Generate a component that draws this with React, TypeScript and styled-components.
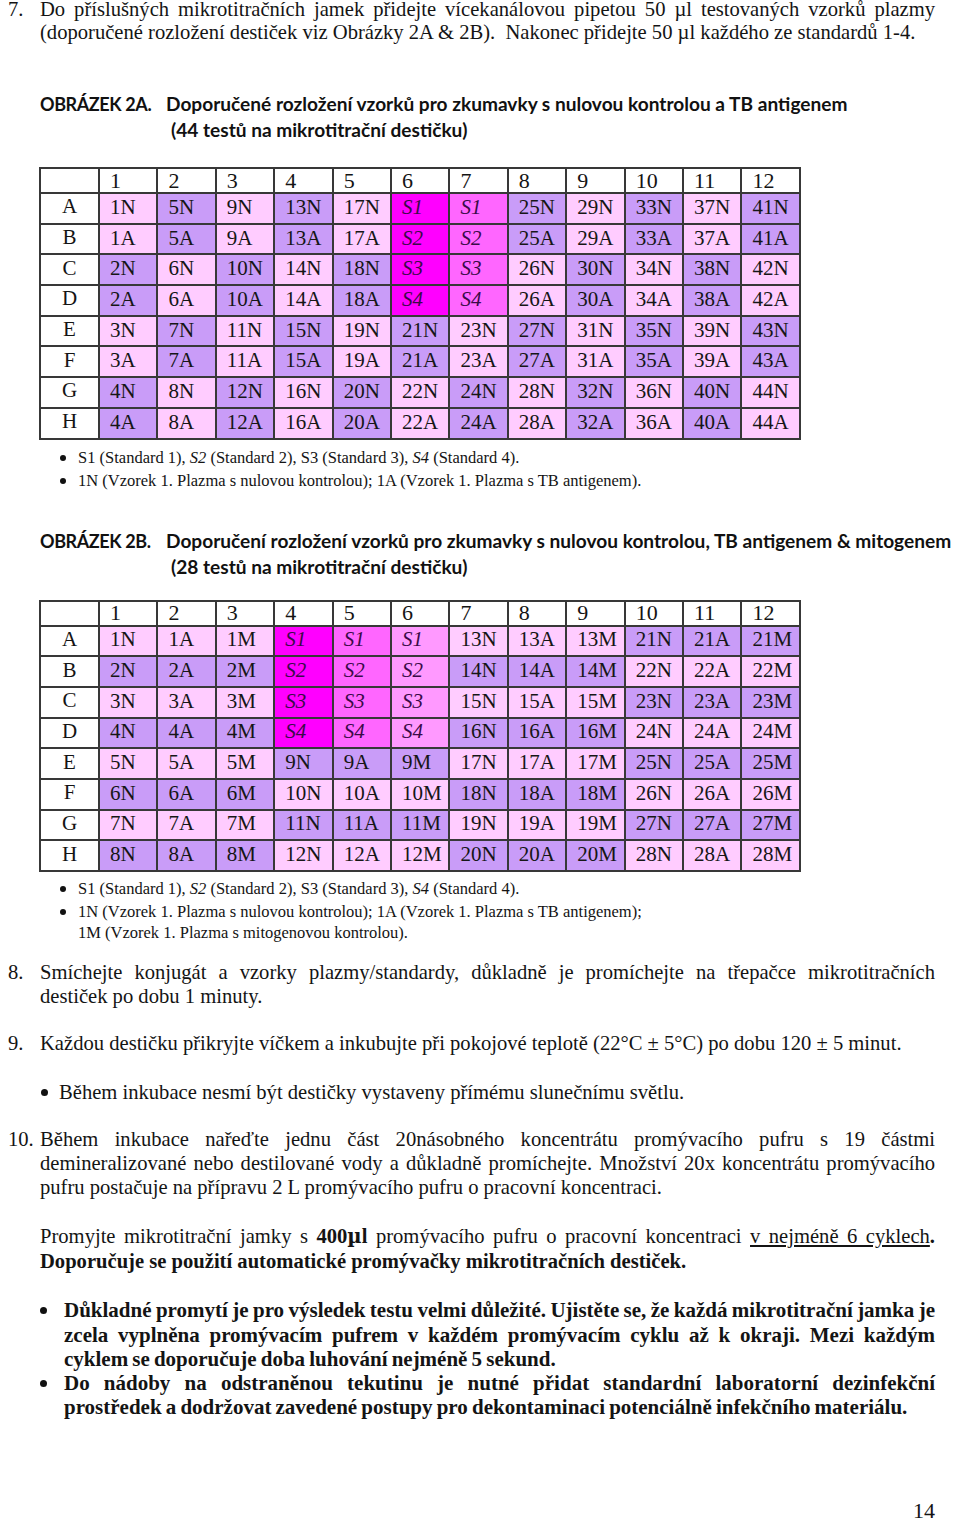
import React from 'react';
import styled, { createGlobalStyle } from 'styled-components';

const GlobalStyle = createGlobalStyle`
  html, body { margin: 0; padding: 0; background: #ffffff; }
  body {
    font-family: "Liberation Serif", "Times New Roman", serif;
    color: #141414;
  }
`;

const Page = styled.div`
  width: 960px;
  min-height: 1523px;
  box-sizing: border-box;
  padding: 0 25px 0 8px;
  display: flex;
  flex-direction: column;
`;

const Step = styled.div<{ $mt: number; $lh: number }>`
  display: grid;
  grid-template-columns: 32px 1fr;
  font-size: 20.6px;
  line-height: ${(p) => p.$lh}px;
  margin-top: ${(p) => p.$mt}px;
`;

const StepNo = styled.span``;

const StepText = styled.div`
  text-align: justify;
`;

const FigHeading = styled.div<{ $mt: number }>`
  display: flex;
  margin: ${(p) => p.$mt}px 0 0 32px;
  font-family: Lato, "Open Sans", sans-serif;
  font-weight: 700;
  font-size: 19.1px;
  line-height: 26px;
  color: #111;
  white-space: nowrap;
`;

const FigLabel = styled.span`
  flex: none;
  width: 126px;
  font-size: 18px;
  letter-spacing: -0.4px;
`;

const FigTitle = styled.div`
  display: flex;
  flex-direction: column;
`;

const FigSub = styled.span`
  padding-left: 5px;
`;

const Plate = styled.table<{ $mt: number }>`
  border-collapse: collapse;
  table-layout: fixed;
  width: 762px;
  margin: ${(p) => p.$mt}px 0 0 31px;
  border: 2px solid #303030;
  font-size: 21px;
  line-height: 1;
`;

const HeadRow = styled.tr`
  height: 25px;
`;

const BodyRow = styled.tr`
  height: 30.7px;
`;

const HeadCell = styled.th`
  border: 2px solid #383838;
  background: #ffffff;
  padding: 0 0 0 10px;
  font-size: 22px;
  font-weight: 400;
  text-align: left;
  vertical-align: middle;
`;

const RowLabel = styled.th`
  border: 2px solid #383838;
  background: #ffffff;
  padding: 0 0 3px 0;
  font-weight: 400;
  text-align: center;
  vertical-align: middle;
`;

const Well = styled.td<{ $bg: string; $std: boolean }>`
  border: 2px solid #383838;
  background: ${(p) => p.$bg};
  padding: 0 0 2px 10px;
  text-align: left;
  vertical-align: middle;
  white-space: nowrap;
  font-style: ${(p) => (p.$std ? 'italic' : 'normal')};
  color: ${(p) => (p.$std ? '#3a0b48' : '#161616')};
`;

const Notes = styled.ul<{ $mt: number }>`
  list-style: none;
  margin: ${(p) => p.$mt}px 0 0 52px;
  padding: 0;
  font-size: 16.5px;
  line-height: 21px;
`;

const NoteItem = styled.li`
  display: grid;
  grid-template-columns: 18px 1fr;
  margin-bottom: 2px;
`;

const Dot = styled.span<{ $top: number; $size?: number }>`
  display: block;
  width: ${(p) => p.$size ?? 6}px;
  height: ${(p) => p.$size ?? 6}px;
  margin-top: ${(p) => p.$top}px;
  border-radius: 50%;
  background: #111;
`;

const BulletList = styled.ul<{ $mt: number; $ml: number; $gap: number; $bold?: boolean }>`
  list-style: none;
  margin: ${(p) => p.$mt}px 0 0 ${(p) => p.$ml}px;
  padding: 0;
  font-size: ${(p) => (p.$bold ? 21 : 20.6)}px;
  word-spacing: ${(p) => (p.$bold ? -1.1 : 0)}px;
  line-height: 24.3px;
  font-weight: ${(p) => (p.$bold ? 700 : 400)};
  & > li {
    display: grid;
    grid-template-columns: ${(p) => p.$gap}px 1fr;
    text-align: justify;
  }
`;

const Para = styled.div<{ $mt: number }>`
  margin: ${(p) => p.$mt}px 0 0 32px;
  font-size: 20.6px;
  line-height: 24px;
`;

const JustLine = styled.div`
  text-align: justify;
  text-align-last: justify;
`;

const BoldLine = styled.div`
  font-weight: 700;
`;

const Under = styled.span`
  text-decoration: underline;
  text-underline-offset: 2px;
`;

const Micro = styled.span`
  font-family: "DejaVu Serif", serif;
  font-size: 0.95em;
`;

const PageNo = styled.div`
  margin-top: auto;
  text-align: right;
  font-size: 22px;
  line-height: 24px;
`;

const LIGHT = '#ffccff';
const PURPLE = '#c99cf8';
const MAG1 = '#ff00ff';
const MAG2 = '#ff66ff';
const MAG3 = '#ff99ff';

const ROWS = ['A', 'B', 'C', 'D', 'E', 'F', 'G', 'H'];
const COLS = [1, 2, 3, 4, 5, 6, 7, 8, 9, 10, 11, 12];

type WellData = { label: string; bg: string; std: boolean };

const plate2A: WellData[][] = (() => {
  const data = [
    ['1N', '5N', '9N', '13N', '17N', 'S1', 'S1', '25N', '29N', '33N', '37N', '41N'],
    ['1A', '5A', '9A', '13A', '17A', 'S2', 'S2', '25A', '29A', '33A', '37A', '41A'],
    ['2N', '6N', '10N', '14N', '18N', 'S3', 'S3', '26N', '30N', '34N', '38N', '42N'],
    ['2A', '6A', '10A', '14A', '18A', 'S4', 'S4', '26A', '30A', '34A', '38A', '42A'],
    ['3N', '7N', '11N', '15N', '19N', '21N', '23N', '27N', '31N', '35N', '39N', '43N'],
    ['3A', '7A', '11A', '15A', '19A', '21A', '23A', '27A', '31A', '35A', '39A', '43A'],
    ['4N', '8N', '12N', '16N', '20N', '22N', '24N', '28N', '32N', '36N', '40N', '44N'],
    ['4A', '8A', '12A', '16A', '20A', '22A', '24A', '28A', '32A', '36A', '40A', '44A'],
  ];
  return data.map((row, r) =>
    row.map((label, c) => {
      const std = label.startsWith('S');
      let bg = (Math.floor(r / 2) + c) % 2 === 0 ? LIGHT : PURPLE;
      if (std) bg = c === 5 ? MAG1 : MAG2;
      return { label, bg, std };
    })
  );
})();

const plate2B: WellData[][] = ROWS.map((_, r) => {
  const cells: WellData[] = [];
  for (let g = 0; g < 4; g++) {
    for (let k = 0; k < 3; k++) {
      const suffix = ['N', 'A', 'M'][k];
      if (g === 1 && r < 4) {
        cells.push({ label: `S${r + 1}`, bg: [MAG1, MAG2, MAG3][k], std: true });
      } else {
        const base = g === 0 ? r + 1 : g === 1 ? r + 5 : g === 2 ? r + 13 : r + 21;
        cells.push({
          label: `${base}${suffix}`,
          bg: (r + g) % 2 === 0 ? LIGHT : PURPLE,
          std: false,
        });
      }
    }
  }
  return cells;
});

const PlateTable: React.FC<{ data: WellData[][]; mt: number }> = ({ data, mt }) => (
  <Plate $mt={mt}>
    <colgroup>
      <col style={{ width: 59 }} />
      {COLS.map((c) => (
        <col key={c} />
      ))}
    </colgroup>
    <thead>
      <HeadRow>
        <HeadCell />
        {COLS.map((c) => (
          <HeadCell key={c}>{c}</HeadCell>
        ))}
      </HeadRow>
    </thead>
    <tbody>
      {data.map((row, r) => (
        <BodyRow key={ROWS[r]}>
          <RowLabel>{ROWS[r]}</RowLabel>
          {row.map((w, c) => (
            <Well key={c} $bg={w.bg} $std={w.std}>
              {w.label}
            </Well>
          ))}
        </BodyRow>
      ))}
    </tbody>
  </Plate>
);

const StdNote = () => (
  <NoteItem>
    <Dot $top={8} />
    <span>
      S1 (Standard 1), <i>S2</i> (Standard 2), S3 (Standard 3), <i>S4</i> (Standard 4).
    </span>
  </NoteItem>
);

export default function App() {
  return (
    <>
      <GlobalStyle />
      <Page>
        <Step $mt={-2} $lh={22.5}>
          <StepNo>7.</StepNo>
          <StepText>
            Do příslušných mikrotitračních jamek přidejte vícekanálovou pipetou 50 µl testovaných
            vzorků plazmy (doporučené rozložení destiček viz Obrázky 2A &amp; 2B).&nbsp; Nakonec
            přidejte 50 µl každého ze standardů 1-4.
          </StepText>
        </Step>

        <FigHeading $mt={48}>
          <FigLabel>OBRÁZEK 2A.</FigLabel>
          <FigTitle>
            <span>Doporučené rozložení vzorků pro zkumavky s nulovou kontrolou a TB antigenem</span>
            <FigSub>(44 testů na mikrotitrační destičku)</FigSub>
          </FigTitle>
        </FigHeading>

        <PlateTable data={plate2A} mt={24} />

        <Notes $mt={7}>
          <StdNote />
          <NoteItem>
            <Dot $top={8} />
            <span>1N (Vzorek 1. Plazma s nulovou kontrolou); 1A (Vzorek 1. Plazma s TB antigenem).</span>
          </NoteItem>
        </Notes>

        <FigHeading $mt={35}>
          <FigLabel>OBRÁZEK 2B.</FigLabel>
          <FigTitle>
            <span>
              Doporučení rozložení vzorků pro zkumavky s nulovou kontrolou, TB antigenem &amp; mitogenem
            </span>
            <FigSub>(28 testů na mikrotitrační destičku)</FigSub>
          </FigTitle>
        </FigHeading>

        <PlateTable data={plate2B} mt={20} />

        <Notes $mt={6}>
          <StdNote />
          <NoteItem>
            <Dot $top={8} />
            <span>
              1N (Vzorek 1. Plazma s nulovou kontrolou); 1A (Vzorek 1. Plazma s TB antigenem);
              <br />
              1M (Vzorek 1. Plazma s mitogenovou kontrolou).
            </span>
          </NoteItem>
        </Notes>

        <Step $mt={15} $lh={24}>
          <StepNo>8.</StepNo>
          <StepText>
            Smíchejte konjugát a vzorky plazmy/standardy, důkladně je promíchejte na třepačce
            mikrotitračních destiček po dobu 1 minuty.
          </StepText>
        </Step>

        <Step $mt={23} $lh={24}>
          <StepNo>9.</StepNo>
          <StepText>
            Každou destičku přikryjte víčkem a inkubujte při pokojové teplotě (22°C ± 5°C) po dobu
            120 ± 5 minut.
          </StepText>
        </Step>

        <BulletList $mt={25} $ml={33} $gap={18}>
          <li>
            <Dot $top={9} $size={7} />
            <span>Během inkubace nesmí být destičky vystaveny přímému slunečnímu světlu.</span>
          </li>
        </BulletList>

        <Step $mt={23} $lh={24}>
          <StepNo>10.</StepNo>
          <StepText>
            Během inkubace nařeďte jednu část 20násobného koncentrátu promývacího pufru s 19 částmi
            demineralizované nebo destilované vody a důkladně promíchejte. Množství 20x koncentrátu
            promývacího pufru postačuje na přípravu 2 L promývacího pufru o pracovní koncentraci.
          </StepText>
        </Step>

        <Para $mt={25}>
          <JustLine>
            Promyjte mikrotitrační jamky s{' '}
            <b>
              400<Micro>µ</Micro>l
            </b>{' '}
            promývacího pufru o pracovní koncentraci <Under>v nejméně 6 cyklech</Under>
            <b>.</b>
          </JustLine>
          <BoldLine>Doporučuje se použití automatické promývačky mikrotitračních destiček.</BoldLine>
        </Para>

        <BulletList $mt={25} $ml={32} $gap={24} $bold>
          <li>
            <Dot $top={9} $size={7} />
            <span>
              Důkladné promytí je pro výsledek testu velmi důležité. Ujistěte se, že každá
              mikrotitrační jamka je zcela vyplněna promývacím pufrem v každém promývacím cyklu až k
              okraji. Mezi každým cyklem se doporučuje doba luhování nejméně 5 sekund.
            </span>
          </li>
          <li>
            <Dot $top={9} $size={7} />
            <span>
              Do nádoby na odstraněnou tekutinu je nutné přidat standardní laboratorní dezinfekční
              prostředek a dodržovat zavedené postupy pro dekontaminaci potenciálně infekčního
              materiálu.
            </span>
          </li>
        </BulletList>

        <PageNo>14</PageNo>
      </Page>
    </>
  );
}
